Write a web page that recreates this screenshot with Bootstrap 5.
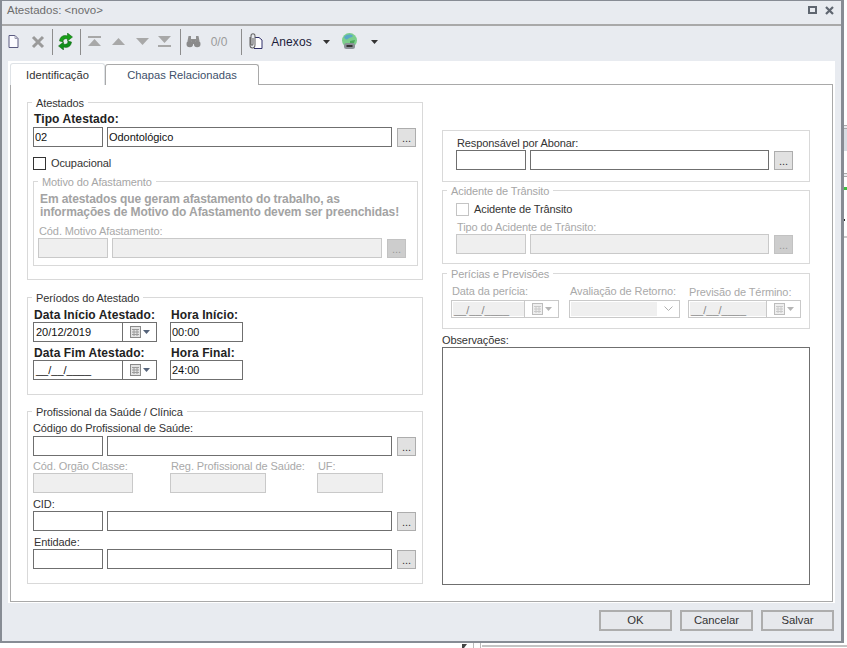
<!DOCTYPE html>
<html lang="pt-BR">
<head>
<meta charset="utf-8">
<title>Atestados</title>
<link rel="stylesheet" href="https://cdn.jsdelivr.net/npm/bootstrap@5.3.0/dist/css/bootstrap.min.css">
<style>
html,body{margin:0;padding:0;background:#fff;overflow:hidden}
body{font-family:"Liberation Sans",Arial,sans-serif;font-size:11px;line-height:14px;color:#222;letter-spacing:-.1px}
.desk{width:847px;height:648px;overflow:hidden}
.win{width:844px;height:643px;flex:none;background:#e8ebf0;border:solid #878c94;border-width:1px 3px 2px 2px}
.side-strip{width:3px;flex:none}
.s-a{height:125px}.s-l{height:1px;background:#aaa}.s-g{height:2px;background:#e8eaee}
.s-b{height:22px;background:#d8dce2}.s-w1{height:22px}.s-w2{height:10px}
.s-d{height:3px;width:3px;background:#3fbf3f}.s-w3{height:29px}.s-k{height:2px;width:1px;background:#222}.s-w4{height:15px}.s-f{height:2px;background:#c9c9c9}
.titlebar{height:25px;padding:2px 7px 0 5px;color:#6d6d6d;font-size:11.5px;letter-spacing:0;border-bottom:2px solid #a9a9a9;flex:none}
.tb-tools{height:35px;padding:0 0 4px 1px;flex:none}
.ti{display:flex;align-items:center;justify-content:center;flex:none;height:31px}
.tsep{width:1px;height:26px;background:#8d8d8d;flex:none}
.counter{color:#9b9b9b;font-size:12px;letter-spacing:0}
.anx{color:#1b1b3a;font-size:12px;letter-spacing:.1px}
.sheet{width:827px;height:542px;margin-left:6px;background:#fff;padding:2px 2px 0 2px;flex:none}
.tabstrip.nav-tabs{height:21px;border:0;margin:0;flex-wrap:nowrap;position:relative;z-index:1}
.tabstrip .nav-link{height:21px;padding:0;border:1px solid #a9a9a9;border-bottom:0;border-radius:3px 3px 0 0;color:#40506a;font-size:11.2px;line-height:20px;text-align:center;background:#fff;margin:1px 0 0;letter-spacing:0}
.tabstrip .nav-link.active{height:22px;margin:0;color:#333;position:relative;z-index:2;width:95px;padding-top:1px}
.tabstrip .t2{width:154px}
.pane{width:823px;height:518px;border:1px solid #a9a9a9;padding-left:16px;gap:19px;background:#fff}
.lcol{width:396px;flex:none}
.rcol{width:368px;flex:none;padding-top:45px}
.grp{border:1px solid #d9d9d9;position:relative;padding-left:5px}
.legendt{position:absolute;left:4px;top:-7px;background:#fff;padding:0 4px;line-height:14px;color:#333;white-space:nowrap}
.dis .legendt{color:#a6a6a6}
.lb{display:block;height:14px;line-height:14px;margin:0;white-space:nowrap;color:#333}
.lb.b{font-weight:700;font-size:12px;color:#222;letter-spacing:.1px}
.dis .lb,.lb.off{color:#a9a9a9}
.form-control.fld{height:20px;min-height:0;padding:0 1px;border:1px solid #6f6f6f;border-radius:0;font-size:11px;letter-spacing:-.05px;line-height:18px;color:#111;flex:none;box-shadow:none;background:#fff}
.form-control.fld.off,.form-control.fld:disabled{border:1px solid #c9c9c9;background:#efefef}
.w70{width:70px}.w285{width:285px}.w270{width:270px}.w239{width:239px}.w73{width:73px}
.w100{width:100px}.w96{width:96px}.w66{width:66px}
.btn.dots{width:19px;height:19px;margin:1px 0 0 1px;padding:0;border:1px solid #adadad;border-radius:0;background:#e1e1e1;color:#333;font-size:11px;line-height:19px;flex:none}
.btn.dots.off{background:#cdcdcd;border-color:#c2c2c2;color:#999;opacity:1}
.ck{width:13px;height:13px;border:1px solid #333;flex:none;display:block}
.ck.off{border-color:#c4c4c4}
.ck-l{margin-left:5px;line-height:13px;color:#333}
.note{margin:11px 0 0 2px;font-weight:700;font-size:12px;line-height:13px;color:#a3a3a3;white-space:nowrap;letter-spacing:-.1px}
.dt{height:20px;width:124px;border:1px solid #6f6f6f;background:#fff;flex:none}
.dt .v{flex:1;padding-left:2px;line-height:18px;color:#111;white-space:nowrap;letter-spacing:0}
.dt .pick{width:34px;border-left:1px solid #6f6f6f;flex:none;display:flex;align-items:center;justify-content:center}
.dt.off{height:18px;border-color:#c9c9c9;width:108px}
.dt.off .v{background:#efefef;color:#888;line-height:16px;margin:1px 0 1px 1px;padding-left:1px}
.dt.off .pick{border-color:#c9c9c9}
.dt.w113{width:113px}
.sel{height:18px;width:111px;border:1px solid #c9c9c9;flex:none;padding:1px;background:#fff}
.sel i{display:block;flex:1;background:#efefef;margin-right:7px}
.area{width:368px;height:238px;border:1px solid #6f6f6f;display:block;background:#fff;resize:none;padding:0}
.btn.act{width:73px;height:21px;padding:0;border:2px solid #adadad;border-radius:0;background:#e6e8ec;color:#333;font-size:11.3px;line-height:17px;flex:none}
.foot{height:37px;padding:7px 7px 0 0;gap:8px;justify-content:flex-end}
.mt1{margin-top:1px}.mt3{margin-top:3px}.mt4{margin-top:4px}.mt5{margin-top:5px}.mt9{margin-top:9px}.mt10{margin-top:10px}.mt11{margin-top:11px}.mt12{margin-top:12px}
.mt16{margin-top:16px}.mt17{margin-top:17px}.mt8{margin-top:8px}
.h178{height:178px}.h98{height:98px}.h173{height:173px}.h52{height:52px}.h74{height:74px}.h56{height:56px}
.gap4{gap:4px}
.c13{gap:13px}
.sub{height:85px;width:385px;padding-left:4px;margin-top:11px}
.pl13{padding-left:13px}.pl8{padding-left:8px}
.ind1{padding-left:1px}
.f124{width:124px}.f73{width:73px}
.bottom-bits{height:5px;padding-left:462px}
.bb-b{width:8px;height:5px;border:1px solid #bbb;border-width:0 1px;margin-left:6px}
.bb-c{flex:1;height:2px;margin-top:2px;margin-left:1px;background:#c4c4c4}
</style>
</head>
<body>
<div class="desk d-flex flex-column">
<div class="d-flex">
<div class="win d-flex flex-column">
  <div class="titlebar d-flex justify-content-between">
    <span>Atestados: &lt;novo&gt;</span>
    <span class="d-flex" style="gap:8px">
      <svg width="9" height="8" viewBox="0 0 9 8" class="mt3"><rect x="1" y="1" width="7" height="6" fill="none" stroke="#5f6670" stroke-width="2"/></svg>
      <svg width="9" height="9" viewBox="0 0 9 9" class="mt3"><path d="M1 1l7 7M8 1L1 8" stroke="#5f6670" stroke-width="2.2"/></svg>
    </span>
  </div>
  <div class="tb-tools d-flex align-items-center">
    <span class="ti" style="width:20px"><svg width="13" height="15" viewBox="0 0 13 15"><path d="M2 1.500h6l3 3v9H2z" fill="#fbfbff" stroke="#5a5a80"/><path d="M8 1.500v3h3" fill="none" stroke="#9a9ab0"/></svg></span>
    <span class="ti" style="width:29px"><svg width="14" height="14" viewBox="0 0 14 14"><path d="M2 2l10 10M12 2L2 12" stroke="#9a9a9a" stroke-width="3"/></svg></span>
    <span class="tsep"></span>
    <span class="ti" style="width:27px;padding-right:3px"><svg width="15" height="17" viewBox="0 0 15 17"><path d="M1.500 8C2 4 5 1.500 9.500 3V0l5 4-5 4V6C6.500 5 5 6.500 5 9z" fill="#18a018" stroke="#0c5c0c" stroke-width=".5"/><path d="M13.500 9c-.5 4-3.500 6.500-8 5v3l-5-4 5-4v2c3 1 4.500-.5 4.500-3z" fill="#0f8f1a" stroke="#0c5c0c" stroke-width=".5"/></svg></span>
    <span class="tsep"></span>
    <span class="ti" style="width:26px"><svg width="13" height="11" viewBox="0 0 13 11"><rect x="0" y="0" width="13" height="2" fill="#a8a8a8"/><path d="M6.500 3L13 10H0z" fill="#a8a8a8"/></svg></span>
    <span class="ti" style="width:23px"><svg width="13" height="7" viewBox="0 0 13 7"><path d="M6.500 0L13 7H0z" fill="#a8a8a8"/></svg></span>
    <span class="ti" style="width:24px"><svg width="13" height="7" viewBox="0 0 13 7"><path d="M0 0h13L6.500 7z" fill="#a8a8a8"/></svg></span>
    <span class="ti" style="width:26px;padding-right:5px"><svg width="13" height="11" viewBox="0 0 13 11"><path d="M0 0h13L6.500 7z" fill="#a8a8a8"/><rect x="0" y="9" width="13" height="2" fill="#a8a8a8"/></svg></span>
    <span class="tsep"></span>
    <span class="ti" style="width:24px"><svg width="15" height="13" viewBox="0 0 15 13"><path d="M2.500 1h2.500v3h5V1h2.500l1 5h-5.500v-1h-2v1H1.500z" fill="#8f8f8f"/><circle cx="3.800" cy="9" r="3.300" fill="#8a8a8a"/><circle cx="11.200" cy="9" r="3.300" fill="#8a8a8a"/><rect x="6" y="5" width="3" height="4" fill="#8a8a8a"/></svg></span>
    <span class="ti counter" style="width:36px;padding-right:8px">0/0</span>
    <span class="tsep"></span>
    <span class="ti" style="width:26px"><svg width="17" height="17" viewBox="0 0 17 17"><path d="M8 4.500h4l3 2.500v8.500H7" fill="#fff" stroke="#30306a"/><path d="M3 4v8c0 4 5 4 5 0V3c0-3-4-3-4 0v8c0 1.500 2 1.500 2 0V5" fill="none" stroke="#6b6b6b" stroke-width="1.100"/></svg></span>
    <span class="ti anx" style="width:47px">Anexos</span>
    <span class="ti" style="width:22px"><svg width="7" height="4" viewBox="0 0 7 4"><path d="M0 0h7L3.500 4z" fill="#333"/></svg></span>
    <span class="ti" style="width:24px"><svg width="17" height="17" viewBox="0 0 17 17"><circle cx="8.500" cy="7.500" r="7.500" fill="#7ccf8c"/><path d="M3 4c3-3 7-3 9-1-1 2-4 1-5 3-2 1-3 0-4-2z" fill="#5aa7c8"/><path d="M9 8l5-1-1 3H9z" fill="#4aa85a"/><rect x="3" y="10" width="11" height="6" rx="2.500" fill="#8a9096"/><rect x="5.500" y="12" width="6" height="2" fill="#333"/></svg></span>
    <span class="ti" style="width:26px"><svg width="7" height="4" viewBox="0 0 7 4"><path d="M0 0h7L3.500 4z" fill="#333"/></svg></span>
  </div>
  <div class="sheet">
    <ul class="nav nav-tabs tabstrip">
      <li class="nav-item"><a class="nav-link active" href="#">Identificação</a></li>
      <li class="nav-item"><a class="nav-link t2" href="#">Chapas Relacionadas</a></li>
    </ul>
    <div class="pane d-flex">
      <div class="lcol">
        <section class="grp h178 mt17">
          <span class="legendt">Atestados</span>
          <label class="lb b mt9 ind1">Tipo Atestado:</label>
          <div class="d-flex gap4 mt1"><input class="form-control fld w70" value="02"><input class="form-control fld w285" value="Odontológico"><button class="btn dots">...</button></div>
          <div class="d-flex mt10"><span class="ck"></span><span class="ck-l">Ocupacional</span></div>
          <section class="grp dis sub">
            <span class="legendt">Motivo do Afastamento</span>
            <div class="note">Em atestados que geram afastamento do trabalho, as<br>informações de Motivo do Afastamento devem ser preenchidas!</div>
            <label class="lb mt5 ind1">Cód. Motivo Afastamento:</label>
            <div class="d-flex gap4"><input class="form-control fld off w70" disabled><input class="form-control fld off w270" disabled><button class="btn dots off" disabled>...</button></div>
          </section>
        </section>
        <section class="grp h98 mt17">
          <span class="legendt">Períodos do Atestado</span>
          <div class="d-flex c13 mt10">
            <div class="f124"><label class="lb b ind1">Data Início Atestado:</label>
              <div class="dt d-flex"><span class="v">20/12/2019</span><span class="pick"><svg width="20" height="13" viewBox="0 0 20 13"><rect x=".5" y=".5" width="10" height="11" fill="#e4e4e4" stroke="#8a8a8a"/><path d="M2 3.500h7M2 6h7M2 8.500h7M4 3v7M7 3v7" stroke="#9c9c9c"/><path d="M13 4h7l-3.500 4z" fill="#55637a"/></svg></span></div></div>
            <div class="f73"><label class="lb b ind1">Hora Início:</label><input class="form-control fld w73" value="00:00"></div>
          </div>
          <div class="d-flex c13 mt4">
            <div class="f124"><label class="lb b ind1">Data Fim Atestado:</label>
              <div class="dt d-flex"><span class="v">__/__/____</span><span class="pick"><svg width="20" height="13" viewBox="0 0 20 13"><rect x=".5" y=".5" width="10" height="11" fill="#e4e4e4" stroke="#8a8a8a"/><path d="M2 3.500h7M2 6h7M2 8.500h7M4 3v7M7 3v7" stroke="#9c9c9c"/><path d="M13 4h7l-3.500 4z" fill="#55637a"/></svg></span></div></div>
            <div class="f73"><label class="lb b ind1">Hora Final:</label><input class="form-control fld w73" value="24:00"></div>
          </div>
        </section>
        <section class="grp h173 mt16">
          <span class="legendt">Profissional da Saúde / Clínica</span>
          <label class="lb mt9">Código do Profissional de Saúde:</label>
          <div class="d-flex gap4 mt1"><input class="form-control fld w70"><input class="form-control fld w285"><button class="btn dots">...</button></div>
          <div class="d-flex mt3">
            <div style="width:137px"><label class="lb off">Cód. Orgão Classe:</label><input class="form-control fld off w100" disabled></div>
            <div style="width:147px"><label class="lb off ind1">Reg. Profissional de Saúde:</label><input class="form-control fld off w96" disabled></div>
            <div><label class="lb off ind1">UF:</label><input class="form-control fld off w66" disabled></div>
          </div>
          <label class="lb mt4">CID:</label>
          <div class="d-flex gap4"><input class="form-control fld w70"><input class="form-control fld w285"><button class="btn dots">...</button></div>
          <label class="lb mt4 ind1">Entidade:</label>
          <div class="d-flex gap4"><input class="form-control fld w70"><input class="form-control fld w285"><button class="btn dots">...</button></div>
        </section>
      </div>
      <div class="rcol">
        <section class="grp h52 pl13">
          <label class="lb mt5 ind1">Responsável por Abonar:</label>
          <div class="d-flex gap4"><input class="form-control fld w70"><input class="form-control fld w239"><button class="btn dots">...</button></div>
        </section>
        <section class="grp dis h74 pl13 mt8">
          <span class="legendt">Acidente de Trânsito</span>
          <div class="d-flex mt12"><span class="ck off"></span><span class="ck-l">Acidente de Trânsito</span></div>
          <label class="lb mt4 ind1">Tipo do Acidente de Trânsito:</label>
          <div class="d-flex gap4"><input class="form-control fld off w70" disabled><input class="form-control fld off w239" disabled><button class="btn dots off" disabled>...</button></div>
        </section>
        <section class="grp dis h56 pl8" style="margin-top:9px">
          <span class="legendt">Perícias e Previsões</span>
          <div class="d-flex mt10">
            <div style="width:118px"><label class="lb ind1">Data da perícia:</label>
              <div class="dt off d-flex" style="margin-top:2px"><span class="v">__/__/____</span><span class="pick"><svg width="20" height="13" viewBox="0 0 20 13"><rect x=".5" y=".5" width="10" height="11" fill="#efefef" stroke="#bdbdbd"/><path d="M2 3.500h7M2 6h7M2 8.500h7M4 3v7M7 3v7" stroke="#cacaca"/><path d="M13 4h7l-3.500 4z" fill="#b5b5b5"/></svg></span></div></div>
            <div style="width:119px"><label class="lb ind1">Avaliação de Retorno:</label>
              <div class="sel d-flex" style="margin-top:2px"><i></i><svg width="9" height="5" viewBox="0 0 9 5" class="mt4" style="margin-right:5px;flex:none"><path d="M.5.500l4 4 4-4" fill="none" stroke="#b0b0b0"/></svg></div></div>
            <div><label class="lb ind1" style="margin-top:1px;height:13px">Previsão de Término:</label>
              <div class="dt off w113 d-flex" style="margin-top:2px"><span class="v">__/__/____</span><span class="pick"><svg width="20" height="13" viewBox="0 0 20 13"><rect x=".5" y=".5" width="10" height="11" fill="#efefef" stroke="#bdbdbd"/><path d="M2 3.500h7M2 6h7M2 8.500h7M4 3v7M7 3v7" stroke="#cacaca"/><path d="M13 4h7l-3.500 4z" fill="#b5b5b5"/></svg></span></div></div>
          </div>
        </section>
        <label class="lb mt4">Observações:</label>
        <textarea class="area"></textarea>
      </div>
    </div>
  </div>
  <div class="foot d-flex">
    <button class="btn act">OK</button><button class="btn act">Cancelar</button><button class="btn act">Salvar</button>
  </div>
</div>
<div class="side-strip">
  <div class="s-a"></div><div class="s-l"></div><div class="s-g"></div><div class="s-l"></div><div class="s-b"></div><div class="s-w1"></div><div class="s-l"></div><div class="s-g"></div><div class="s-l"></div><div class="s-w2"></div><div class="s-d"></div><div class="s-w3"></div><div class="s-k"></div><div class="s-w4"></div><div class="s-f"></div>
</div>
</div>
<div class="bottom-bits d-flex"><svg width="5" height="5" viewBox="0 0 5 5"><path d="M0 5V1h5L2 5z" fill="#444"/></svg><span class="bb-b"></span><span class="bb-c"></span></div>
</div>
</body>
</html>
